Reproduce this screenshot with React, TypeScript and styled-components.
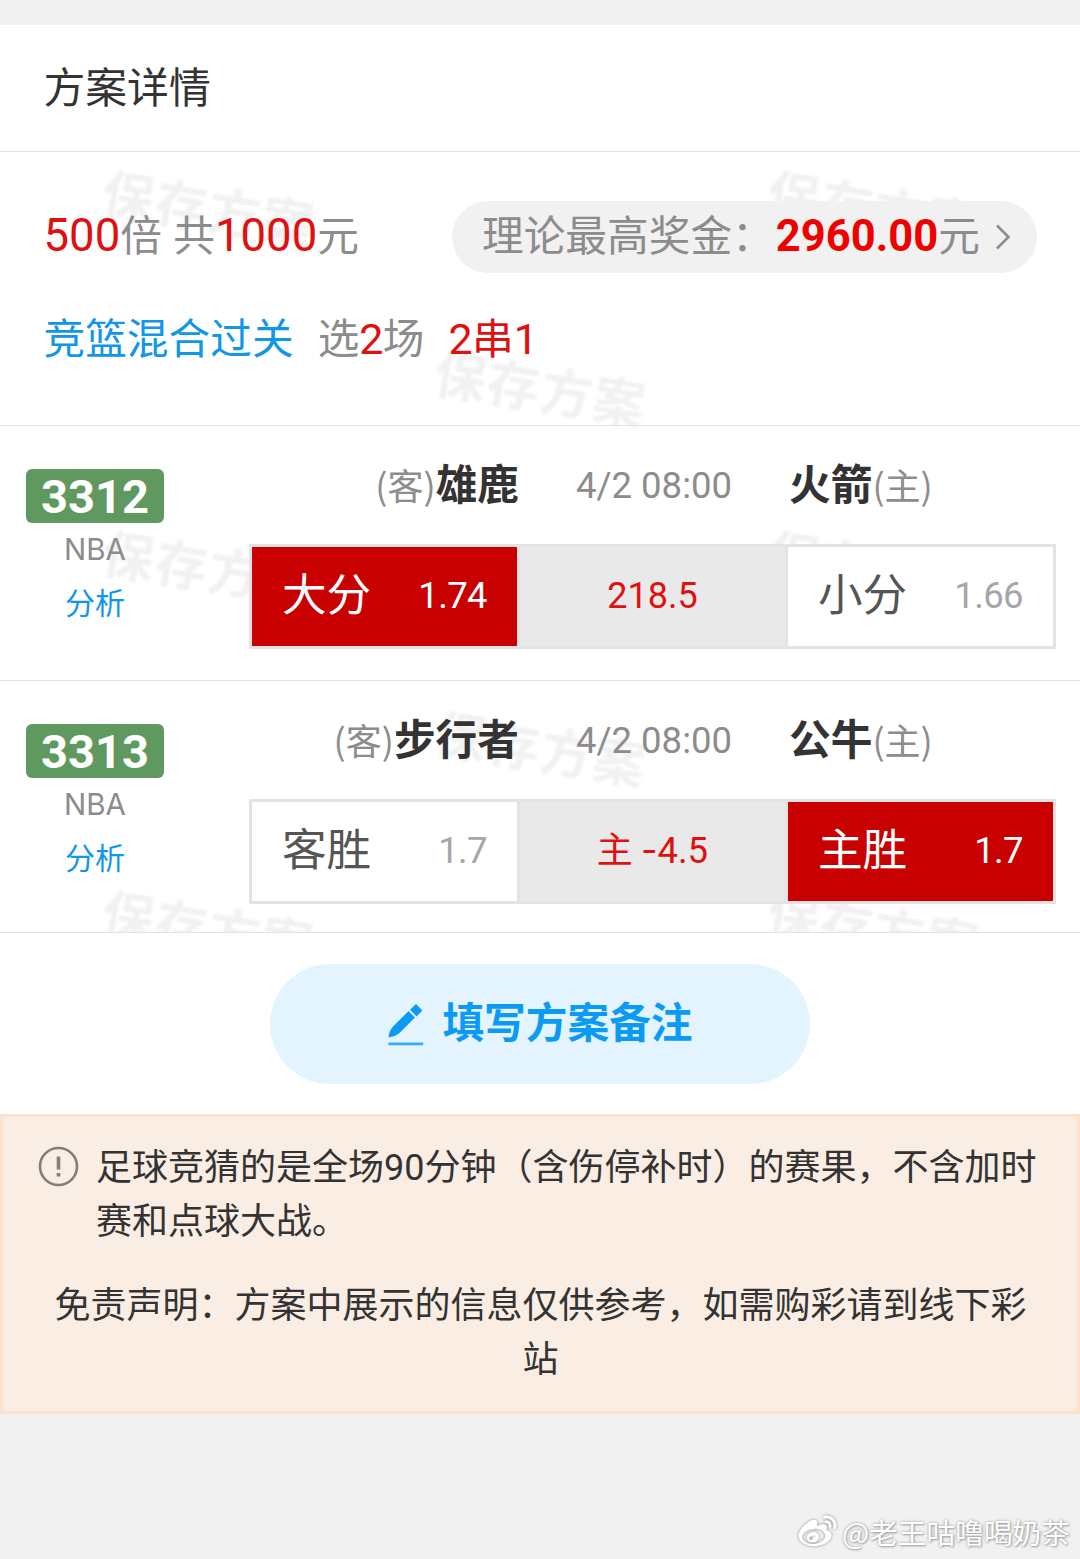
import React from "react";
import styled, { createGlobalStyle } from "styled-components";
import { FaWeibo } from "react-icons/fa";

const GlobalStyle = createGlobalStyle`
  * { box-sizing: border-box; }
  body {
    margin: 0;
    background: #f1f1f1;
    color: #333;
    font-family: "Noto Sans CJK SC", sans-serif;
    -webkit-font-smoothing: antialiased;
  }
`;

const Page = styled.main`
  width: 1080px;
  height: 1559px;
  padding-top: 25px;
  display: flex;
  flex-direction: column;
  overflow: hidden;
`;

const TitleBar = styled.header`
  height: 127px;
  padding: 0 43.5px 7px;
  display: flex;
  align-items: center;
  background: #fff;
  border-bottom: 1px solid #e2e2e2;
  font-size: 41.8px;
  line-height: 60px;
`;

const Scheme = styled.section`
  position: relative;
  isolation: isolate;
  background: #fff;
  overflow: hidden;
`;

const Stamp = styled.span<{ $x: number; $y: number }>`
  position: absolute;
  z-index: -1;
  left: ${(p) => p.$x}px;
  top: ${(p) => p.$y}px;
  width: 214px;
  font-size: 52px;
  letter-spacing: 1.5px;
  line-height: 54px;
  font-weight: 700;
  color: #f1f1f1;
  filter: blur(1.2px);
  transform: rotate(9deg);
  white-space: nowrap;
`;

const Num = styled.span<{ $size?: number; $gap?: number; $bold?: boolean; $color?: string }>`
  font-family: Roboto, "Noto Sans CJK SC", sans-serif;
  font-weight: ${(p) => (p.$bold ? 700 : 400)};
  line-height: 1;
  letter-spacing: ${(p) => p.$gap ?? 0}px;
  ${(p) => (p.$size ? `font-size: ${p.$size}px;` : "")}
  ${(p) => (p.$color ? `color: ${p.$color};` : "")}
`;

const Sign = styled.span`
  font-family: Inter, sans-serif;
  line-height: 1;
`;

const Summary = styled.div`
  height: 274px;
  padding: 49px 43px 0 43.5px;
  border-bottom: 1px solid #e2e2e2;
  font-size: 41.7px;
  line-height: 60px;
  color: #8c8c8c;
`;

const StakeRow = styled.div`
  height: 72px;
  display: flex;
  align-items: center;
  justify-content: space-between;
  white-space: nowrap;
`;

const Stake = styled.div`
  padding-bottom: 8px;
  word-spacing: 2px;
`;

const Prize = styled.div`
  width: 585px;
  height: 72px;
  padding: 0 25px 9px 30px;
  border-radius: 36px;
  background: #f1f1f1;
  display: flex;
  align-items: center;
`;

const PrizeAmount = styled.span`
  margin-left: 2px;
`;

const Chevron = styled.svg`
  flex: none;
  width: 17px;
  height: 28px;
  margin: 9px 0 0 14px;
`;

const PlayRow = styled.div`
  margin-top: 33px;
  display: flex;
  gap: 24px;
  white-space: nowrap;
`;

const PlayType = styled.span`
  color: #1296e8;
`;

const Pass = styled.span`
  color: #e01010;
`;

const Match = styled.article<{ $height: number }>`
  height: ${(p) => p.$height}px;
  padding: 0 24px 0 26px;
  display: grid;
  grid-template-columns: 138px 807px;
  justify-content: space-between;
  border-bottom: 1px solid #e2e2e2;
`;

const MatchInfo = styled.div`
  padding-top: 43px;
  display: flex;
  flex-direction: column;
  align-items: center;
`;

const Code = styled.div`
  width: 138px;
  height: 54px;
  padding-top: 1px;
  border-radius: 6px;
  background: #5f9960;
  color: #fff;
  display: flex;
  align-items: center;
  justify-content: center;
`;

const League = styled.div`
  height: 54px;
  font-family: Inter, sans-serif;
  font-size: 29.5px;
  line-height: 52px;
  color: #8c8c8c;
`;

const Analysis = styled.div`
  height: 54px;
  font-size: 30px;
  line-height: 48px;
  color: #1296e8;
`;

const Teams = styled.div`
  height: 118px;
  display: grid;
  grid-template-columns: 270px 270px 267px;
  align-items: baseline;
  padding-top: 25.5px;
  line-height: 60px;
  white-space: nowrap;
`;

const Team = styled.div<{ $side: "guest" | "host" }>`
  text-align: ${(p) => (p.$side === "guest" ? "right" : "left")};
  color: #8c8c8c;
  font-size: 36px;
`;

const TeamName = styled.strong`
  font-size: 41.7px;
  font-weight: 700;
  color: #333;
`;

const Kickoff = styled.div`
  text-align: center;
  color: #8c8c8c;

  ${Num} {
    vertical-align: 2px;
  }
`;

const OddsTable = styled.div`
  height: 105px;
  padding: 3px;
  display: grid;
  grid-template-columns: repeat(3, 265px);
  gap: 3px;
  background: #e3e3e3;
`;

const Option = styled.div<{ $picked: boolean }>`
  padding: 0 30px;
  display: flex;
  align-items: center;
  justify-content: space-between;
  background: ${(p) => (p.$picked ? "#c90000" : "#fff")};
  color: ${(p) => (p.$picked ? "#fff" : "#555")};
  font-size: 44.6px;
  line-height: 64px;
`;

const OptionLabel = styled.span`
  padding-bottom: 9px;
`;

const Handicap = styled.div`
  padding-bottom: 9px;
  display: flex;
  align-items: center;
  justify-content: center;
  background: #e9e9e9;
  color: #e01010;
  font-size: 36px;
`;

const RemarkArea = styled.div`
  height: 181px;
  padding-top: 31px;
  display: flex;
  justify-content: center;
  background: #fff;
`;

const RemarkButton = styled.button`
  width: 540px;
  height: 120px;
  padding: 0 0 9px;
  border: 0;
  border-radius: 60px;
  background: #e3f4ff;
  color: #0b9bf5;
  display: flex;
  align-items: center;
  justify-content: center;
  gap: 18px;
  font: 700 41.7px/60px "Noto Sans CJK SC", sans-serif;
`;

const PencilIcon = styled.svg`
  width: 37px;
  height: 44px;
  margin-top: 10px;
`;

const Notice = styled.aside`
  height: 300px;
  border: 3px solid #fee1cd;
  background: #faede3;
  padding: 20px 34px 0 35px;
  font-size: 36px;
  line-height: 54px;
  white-space: nowrap;
`;

const Rule = styled.div`
  display: flex;
  gap: 17px;
`;

const AlertIcon = styled.svg`
  width: 41px;
  height: 41px;
  flex: none;
  margin-top: 9px;
`;

const Text = styled.p`
  margin: 0;
`;

const Disclaimer = styled.p`
  margin: 30px 0 0;
  text-align: center;
`;

const Signature = styled.footer`
  margin-top: auto;
  height: 54px;
  padding-right: 10px;
  display: flex;
  align-items: center;
  justify-content: flex-end;
  gap: 5px;
  color: #fff;
  font-size: 28.7px;
  line-height: 40px;
  text-shadow: 0 0 3px #999, 1px 1px 2px #aaa;

  svg {
    width: 39px;
    height: 38px;
    filter: drop-shadow(0 0 1.5px #888);
  }
`;

const stamps = [
  [102, 28],
  [767, 28],
  [434, 208],
  [102, 388],
  [767, 388],
  [434, 568],
  [102, 748],
  [767, 748],
];

interface Pick {
  label: string;
  odds: string;
  picked: boolean;
}

interface Game {
  code: string;
  guest: string;
  host: string;
  left: Pick;
  middle: React.ReactNode;
  right: Pick;
  height: number;
}

const games: Game[] = [
  {
    code: "3312",
    guest: "雄鹿",
    host: "火箭",
    left: { label: "大分", odds: "1.74", picked: true },
    middle: <Num $size={36}>218.5</Num>,
    right: { label: "小分", odds: "1.66", picked: false },
    height: 255,
  },
  {
    code: "3313",
    guest: "步行者",
    host: "公牛",
    left: { label: "客胜", odds: "1.7", picked: false },
    middle: (
      <>
        主 <Sign>-</Sign>
        <Num $size={36.5}>4.5</Num>
      </>
    ),
    right: { label: "主胜", odds: "1.7", picked: true },
    height: 252,
  },
];

function OddsOption({ label, odds, picked }: Pick) {
  return (
    <Option $picked={picked}>
      <OptionLabel>{label}</OptionLabel>
      <Num $size={36.5} $gap={-0.6} $color={picked ? "#fff" : "#a6a6a6"}>
        {odds}
      </Num>
    </Option>
  );
}

function MatchRow({ game }: { game: Game }) {
  return (
    <Match $height={game.height}>
      <MatchInfo>
        <Code>
          <Num $size={47} $bold>
            {game.code}
          </Num>
        </Code>
        <League>NBA</League>
        <Analysis>分析</Analysis>
      </MatchInfo>
      <div>
        <Teams>
          <Team $side="guest">
            (客)<TeamName>{game.guest}</TeamName>
          </Team>
          <Kickoff>
            <Num $size={36.5}>4/2 08:00</Num>
          </Kickoff>
          <Team $side="host">
            <TeamName>{game.host}</TeamName>(主)
          </Team>
        </Teams>
        <OddsTable>
          <OddsOption {...game.left} />
          <Handicap>
            <span>{game.middle}</span>
          </Handicap>
          <OddsOption {...game.right} />
        </OddsTable>
      </div>
    </Match>
  );
}

export default function App() {
  return (
    <>
      <GlobalStyle />
      <Page>
        <TitleBar>方案详情</TitleBar>
        <Scheme>
          {stamps.map(([x, y]) => (
            <Stamp key={`${x}-${y}`} $x={x} $y={y}>
              保存方案
            </Stamp>
          ))}
          <Summary>
            <StakeRow>
              <Stake>
                <Num $color="#e01010" $size={45.5}>500</Num>倍 共
                <Num $color="#e01010" $size={45.5}>1000</Num>元
              </Stake>
              <Prize>
                <span>理论最高奖金：</span>
                <PrizeAmount>
                  <Num $color="#f00000" $size={43.5} $bold>2960.00</Num>元
                </PrizeAmount>
                <Chevron viewBox="0 0 17 28" fill="none" stroke="#8c8c8c" strokeWidth="2.6">
                  <path d="M3 2.500L14.500 14L3 25.500" />
                </Chevron>
              </Prize>
            </StakeRow>
            <PlayRow>
              <PlayType>竞篮混合过关</PlayType>
              <span>
                选<Num $color="#e01010" $size={43} $gap={-0.7}>2</Num>场
              </span>
              <Pass>
                <Num $size={43} $gap={-0.7}>2</Num>串<Num $size={43} $gap={-0.7}>1</Num>
              </Pass>
            </PlayRow>
          </Summary>
          {games.map((game) => (
            <MatchRow key={game.code} game={game} />
          ))}
        </Scheme>
        <RemarkArea>
          <RemarkButton>
            <PencilIcon viewBox="0 0 37 44" fill="currentColor">
              <path d="M1.600 34.500L2 31Q3.200 26.500 6 23.500L21.600 8L28 14.400L12 30.400Q7.500 33.800 1.600 34.500Z" />
              <path d="M23 6.800L29 1L35.400 7.600L29.500 13.400Z" />
              <rect x="1.300" y="39.500" width="35" height="2.800" rx="1" opacity=".8" />
            </PencilIcon>
            填写方案备注
          </RemarkButton>
        </RemarkArea>
        <Notice>
          <Rule>
            <AlertIcon viewBox="0 0 41 41" fill="none" stroke="#857d76">
              <circle cx="20.500" cy="20.500" r="18.500" strokeWidth="2.600" />
              <path d="M20.500 10.500v13M20.500 27v3.500" strokeWidth="3.600" />
            </AlertIcon>
            <Text>
              足球竞猜的是全场<Num $size={36}>90</Num>分钟（含伤停补时）的赛果，不含加时
              <br />
              赛和点球大战。
            </Text>
          </Rule>
          <Disclaimer>
            免责声明：方案中展示的信息仅供参考，如需购彩请到线下彩
            <br />站
          </Disclaimer>
        </Notice>
        <Signature>
          <FaWeibo />
          <span>@老王咕噜喝奶茶</span>
        </Signature>
      </Page>
    </>
  );
}
